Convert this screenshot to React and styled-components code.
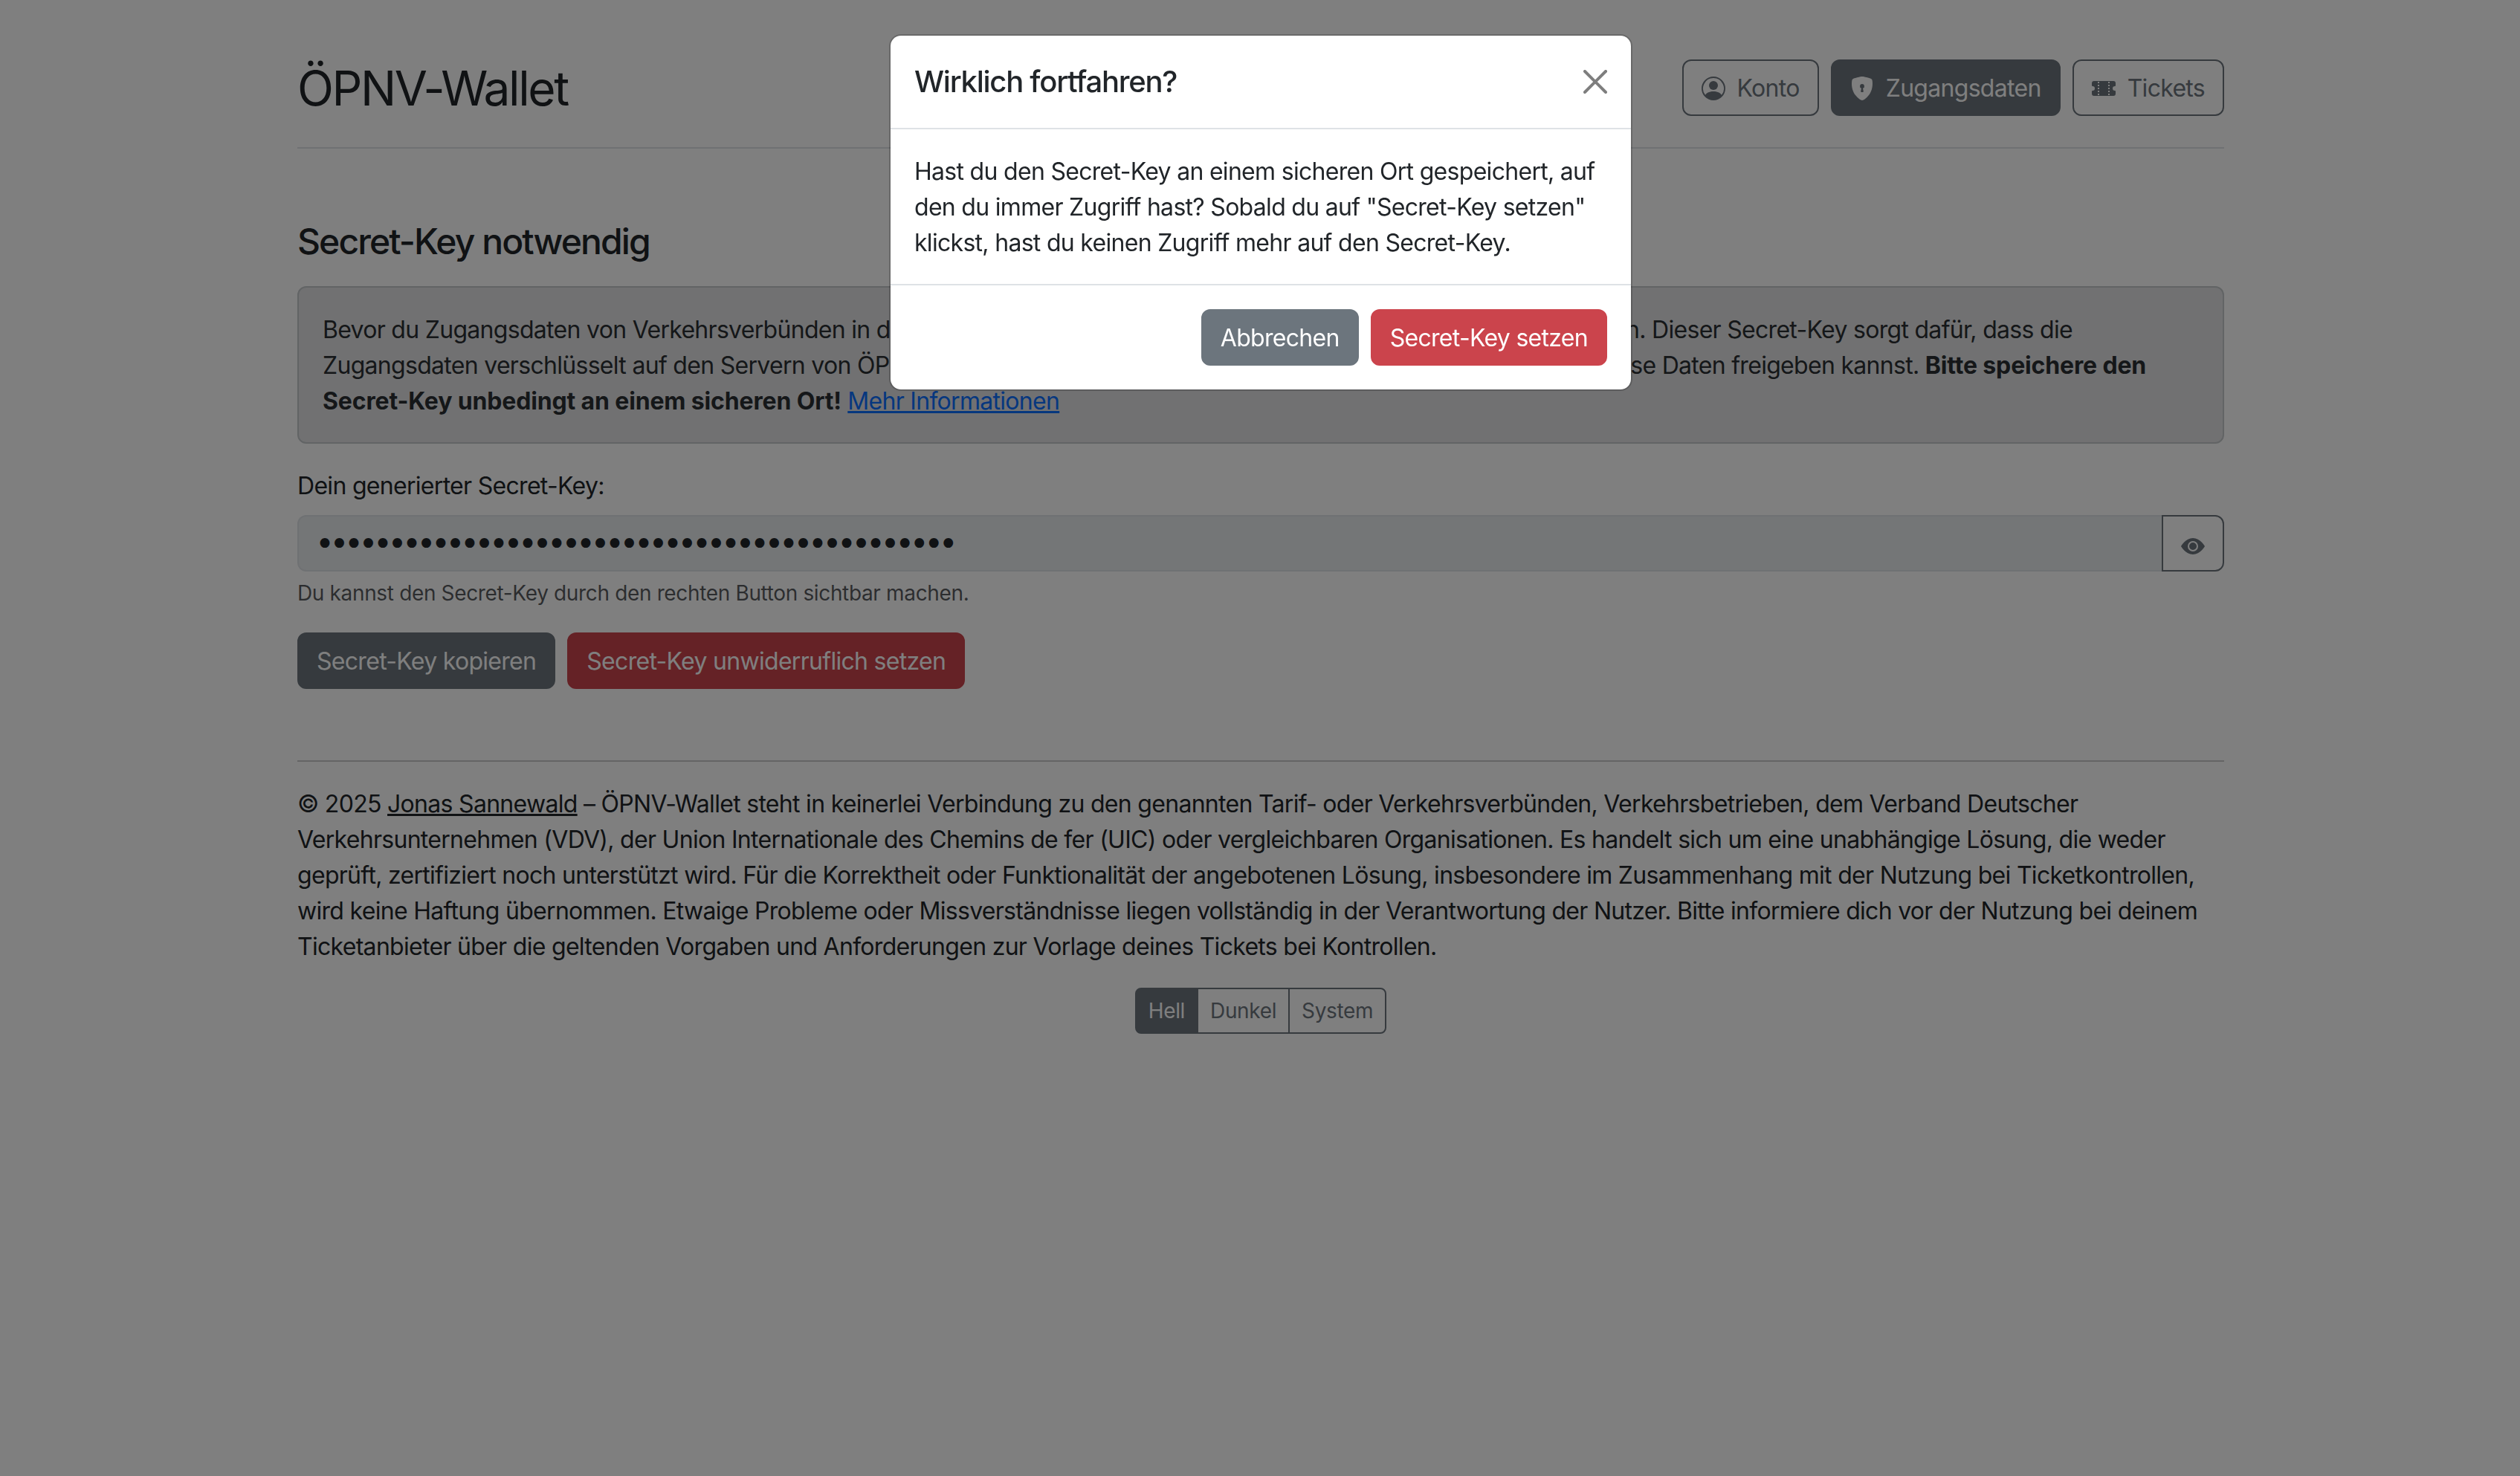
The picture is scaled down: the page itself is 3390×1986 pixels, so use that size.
import React from 'react'
import styled, { createGlobalStyle } from 'styled-components'
import { BsEyeFill, BsPersonCircle, BsShieldLockFill, BsTicketPerforatedFill } from 'react-icons/bs'

const Global = createGlobalStyle`
  html, body { margin: 0; padding: 0; background: #fff; }
  body {
    font-family: Inter, "Liberation Sans", sans-serif;
    font-size: 32px;
    line-height: 48px;
    color: #212529;
    letter-spacing: -0.7px;
  }
  * { box-sizing: border-box; }
`

const Page = styled.div`
  width: 2592px;
  margin-left: 400px;
  padding-top: 80px;
`
const Header = styled.header`
  display: flex;
  justify-content: space-between;
  align-items: center;
  padding-bottom: 42px;
  border-bottom: 2px solid #dee2e6;
`
const Brand = styled.h1`
  margin: 0;
  padding-top: 2px;
  font-size: 64px;
  line-height: 74px;
  font-weight: 400;
  letter-spacing: -2.4px;
`
const Nav = styled.nav`
  display: flex;
  gap: 16px;
`
const Btn = styled.button`
  display: inline-flex;
  align-items: center;
  justify-content: center;
  gap: 16px;
  height: 76px;
  padding: 2px 24px 0;
  border: 2px solid ${p => (p.$outline ? '#6c757d' : p.$color)};
  border-radius: 12px;
  background: ${p => (p.$outline ? 'transparent' : p.$color)};
  color: ${p => (p.$outline ? '#6c757d' : '#fff')};
  font: inherit;
  letter-spacing: inherit;
`
const Main = styled.main`
  padding-top: 96px;
`
const Heading = styled.h4`
  margin: 0 0 32px;
  font-size: 48px;
  line-height: 57px;
  font-weight: 500;
  letter-spacing: -1.9px;
`
const Alert = styled.div`
  padding: 33px 32px 31px;
  margin-bottom: 32px;
  background: #e2e3e5;
  border: 2px solid #c4c8cb;
  border-radius: 12px;
  color: #2b2f32;
  white-space: nowrap;
  b { letter-spacing: -0.15px; }
`
const AlertLink = styled.a`
  color: #0d6efd;
  text-decoration: underline;
`
const Label = styled.label`
  display: block;
  padding-top: 1px;
  margin-bottom: 15px;
`
const InputRow = styled.div`
  display: flex;
`
const SecretInput = styled.input`
  flex: 1;
  height: 76px;
  padding: 0 22px;
  background: #e9ecef;
  border: 2px solid #dee2e6;
  border-right: 0;
  border-radius: 12px 0 0 12px;
  color: #212529;
  font-family: "DejaVu Sans", sans-serif;
  font-size: 44px;
  letter-spacing: -6.45px;
  outline: none;
`
const EyeButton = styled(Btn)`
  width: 84px;
  padding: 8px 0 0;
  border-radius: 0 12px 12px 0;
`
const Hint = styled.div`
  margin: 8px 0 32px;
  font-size: 28px;
  line-height: 42px;
  letter-spacing: -0.35px;
  color: rgba(33, 37, 41, 0.75);
`
const Actions = styled.div`
  display: flex;
  gap: 16px;
`
const Divider = styled.hr`
  margin: 96px 0 32px;
  border: 0;
  border-top: 2px solid #c8c9ca;
`
const Legal = styled.p`
  margin: 0;
  padding-top: 1px;
`
const LegalLink = styled.a`
  color: inherit;
  text-decoration: underline;
`
const ThemeRow = styled.div`
  display: flex;
  justify-content: center;
  margin-top: 31px;
`
const ThemeBtn = styled.button`
  height: 62px;
  padding: 0 16px;
  margin-left: -2px;
  border: 2px solid #6c757d;
  background: ${p => (p.$active ? '#6c757d' : 'transparent')};
  color: ${p => (p.$active ? '#fff' : '#6c757d')};
  font: inherit;
  font-size: 28px;
  line-height: 42px;
  letter-spacing: -0.35px;
  &:first-child { border-radius: 8px 0 0 8px; margin-left: 0; }
  &:last-child { border-radius: 0 8px 8px 0; }
`
const Backdrop = styled.div`
  position: fixed;
  inset: 0;
  display: flex;
  justify-content: center;
  align-items: flex-start;
  padding: 46px 0 0 2px;
  background: rgba(0, 0, 0, 0.5);
`
const Modal = styled.div`
  width: 1000px;
  background: #fff;
  background-clip: padding-box;
  border: 2px solid rgba(0, 0, 0, 0.175);
  border-radius: 16px;
`
const ModalHeader = styled.div`
  display: flex;
  justify-content: space-between;
  align-items: center;
  padding: 32px;
  border-bottom: 2px solid #dee2e6;
`
const ModalTitle = styled.h5`
  margin: 0;
  font-size: 40px;
  line-height: 60px;
  font-weight: 500;
  letter-spacing: -1.25px;
`
const CloseButton = styled.button`
  display: flex;
  padding: 0;
  border: 0;
  background: none;
  opacity: 0.5;
`
const ModalBody = styled.div`
  padding: 33px 32px 31px;
`
const ModalFooter = styled.div`
  display: flex;
  justify-content: flex-end;
  gap: 16px;
  padding: 32px;
  border-top: 2px solid #dee2e6;
`

const RED = '#cb444c'
const GREY = '#6c757d'
const SECRET = 'x'.repeat(44)

function CloseIcon() {
  return (
    <svg width="32" height="32" viewBox="0 0 16 16" fill="#000">
      <path d="M.293.293a1 1 0 0 1 1.414 0L8 6.586 14.293.293a1 1 0 1 1 1.414 1.414L9.414 8l6.293 6.293a1 1 0 0 1-1.414 1.414L8 9.414l-6.293 6.293a1 1 0 0 1-1.414-1.414L6.586 8 .293 1.707a1 1 0 0 1 0-1.414" />
    </svg>
  )
}

export default function App() {
  return (
    <>
      <Global />
      <Page>
        <Header>
          <Brand>ÖPNV-Wallet</Brand>
          <Nav>
            <Btn $outline><BsPersonCircle size={32} />Konto</Btn>
            <Btn $color={GREY}><BsShieldLockFill size={32} />Zugangsdaten</Btn>
            <Btn $outline><BsTicketPerforatedFill size={32} />Tickets</Btn>
          </Nav>
        </Header>
        <Main>
          <Heading>Secret-Key notwendig</Heading>
          <Alert>
            Bevor du Zugangsdaten von Verkehrsverbünden in der ÖPNV-Wallet speichern kannst, musst du den Secret-Key festlegen. Dieser Secret-Key sorgt dafür, dass die<br />
            Zugangsdaten verschlüsselt auf den Servern von ÖPNV-Wallet gespeichert werden und nur du mit deinem Secret-Key diese Daten freigeben kannst. <b>Bitte speichere den</b><br />
            <b>Secret-Key unbedingt an einem sicheren Ort!</b> <AlertLink>Mehr Informationen</AlertLink>
          </Alert>
          <Label>Dein generierter Secret-Key:</Label>
          <InputRow>
            <SecretInput type="password" readOnly value={SECRET} />
            <EyeButton $outline aria-label="Secret-Key anzeigen"><BsEyeFill size={32} /></EyeButton>
          </InputRow>
          <Hint>Du kannst den Secret-Key durch den rechten Button sichtbar machen.</Hint>
          <Actions>
            <Btn $color={GREY}>Secret-Key kopieren</Btn>
            <Btn $color={RED}>Secret-Key unwiderruflich setzen</Btn>
          </Actions>
        </Main>
        <Divider />
        <Legal>
          © 2025 <LegalLink>Jonas Sannewald</LegalLink> – ÖPNV-Wallet steht in keinerlei Verbindung zu den genannten Tarif- oder Verkehrsverbünden, Verkehrsbetrieben, dem Verband Deutscher Verkehrsunternehmen (VDV), der Union Internationale des Chemins de fer (UIC) oder vergleichbaren Organisationen. Es handelt sich um eine unabhängige Lösung, die weder geprüft, zertifiziert noch unterstützt wird. Für die Korrektheit oder Funktionalität der angebotenen Lösung, insbesondere im Zusammenhang mit der Nutzung bei Ticketkontrollen, wird keine Haftung übernommen. Etwaige Probleme oder Missverständnisse liegen vollständig in der Verantwortung der Nutzer. Bitte informiere dich vor der Nutzung bei deinem Ticketanbieter über die geltenden Vorgaben und Anforderungen zur Vorlage deines Tickets bei Kontrollen.
        </Legal>
        <ThemeRow>
          <ThemeBtn $active>Hell</ThemeBtn>
          <ThemeBtn>Dunkel</ThemeBtn>
          <ThemeBtn>System</ThemeBtn>
        </ThemeRow>
      </Page>
      <Backdrop>
        <Modal>
          <ModalHeader>
            <ModalTitle>Wirklich fortfahren?</ModalTitle>
            <CloseButton aria-label="Schließen"><CloseIcon /></CloseButton>
          </ModalHeader>
          <ModalBody>
            Hast du den Secret-Key an einem sicheren Ort gespeichert, auf den du immer Zugriff hast? Sobald du auf "Secret-Key setzen" klickst, hast du keinen Zugriff mehr auf den Secret-Key.
          </ModalBody>
          <ModalFooter>
            <Btn $color={GREY}>Abbrechen</Btn>
            <Btn $color={RED}>Secret-Key setzen</Btn>
          </ModalFooter>
        </Modal>
      </Backdrop>
    </>
  )
}
